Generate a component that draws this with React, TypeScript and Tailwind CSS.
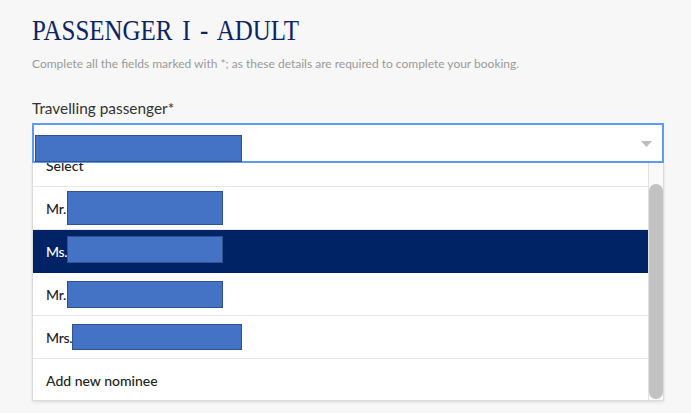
import React from "react";

const Redacted = ({ className }: { className: string }) => (
  <span className={`inline-block bg-[#4472c4] border border-[#2f528f] ${className}`} />
);

const options = [
  { title: "Mr.", box: "w-[156px] h-[34px]", gap: "ml-[1px]", active: false },
  { title: "Ms.", box: "w-[156px] h-[27px] mt-[-4px]", gap: "ml-0", active: true },
  { title: "Mr.", box: "w-[156px] h-[27px]", gap: "ml-[1px]", active: false },
  { title: "Mrs.", box: "w-[170px] h-[26px]", gap: "ml-0", active: false },
];

export default function App() {
  return (
    <div className="w-[691px] h-[413px] overflow-hidden bg-[#f7f7f7] font-['Lato','Open_Sans',sans-serif]">
      <div className="pl-[32px] pr-[27px] pt-[14px]">
        {/* Heading */}
        <h1 className="font-['Liberation_Serif',serif] text-[29px] leading-[32px] text-[#0b2463] tracking-[0px] [word-spacing:4px] [transform:scaleX(0.86)] origin-left">
          PASSENGER I - ADULT
        </h1>
        <p className="mt-[11px] text-[12px] leading-[14px] text-[#9a9a9a]">
          Complete all the fields marked with *; as these details are required to complete your booking.
        </p>

        {/* Field */}
        <label className="block mt-[28px] text-[15.4px] leading-[18px] text-[#333]">
          Travelling passenger*
        </label>
        <div className="mt-[6px] h-[40px] bg-white border-2 border-[#5d9cf5] flex items-center justify-between pl-[1px] pr-[10px]">
          <Redacted className="w-[207px] h-[27px] mt-[10px]" />
          <svg width="11" height="6" viewBox="0 0 11 6" className="mt-[2px]">
            <path d="M0 0 L11 0 L5.5 6 Z" fill="#bdbdbd" />
          </svg>
        </div>

        {/* Dropdown list */}
        <div className="flex h-[238px] bg-white border border-t-0 border-[#dcdcdc] shadow-[0_1px_3px_rgba(0,0,0,0.12)]">
          <div className="flex-1 overflow-hidden">
            <div className="h-[43px] mt-[-19px] border-b border-[#e6e6e6] flex items-center pl-[13px] text-[14px] font-medium text-[#222]">
              Select
            </div>
            {options.map((o, i) => (
              <div
                key={i}
                className={`h-[43px] border-b flex items-center pl-[13px] text-[14px] font-medium ${
                  o.active ? "bg-[#002366] border-[#002366] text-white" : "border-[#e6e6e6] text-[#222]"
                }`}
              >
                <span className="tracking-[-0.3px]">{o.title}</span>
                <Redacted className={`${o.box} ${o.gap}`} />
              </div>
            ))}
            <div className="h-[43px] flex items-center pl-[13px] text-[14px] font-medium text-[#222]">
              Add new nominee
            </div>
          </div>
          <div className="w-[15px] border-l border-[#e2e2e2] bg-[#f9f9f9] flex justify-center pt-[21px] pb-[1px]">
            <div className="w-[9px] flex-1 rounded-full bg-[#c2c2c2]" />
          </div>
        </div>
      </div>
    </div>
  );
}
